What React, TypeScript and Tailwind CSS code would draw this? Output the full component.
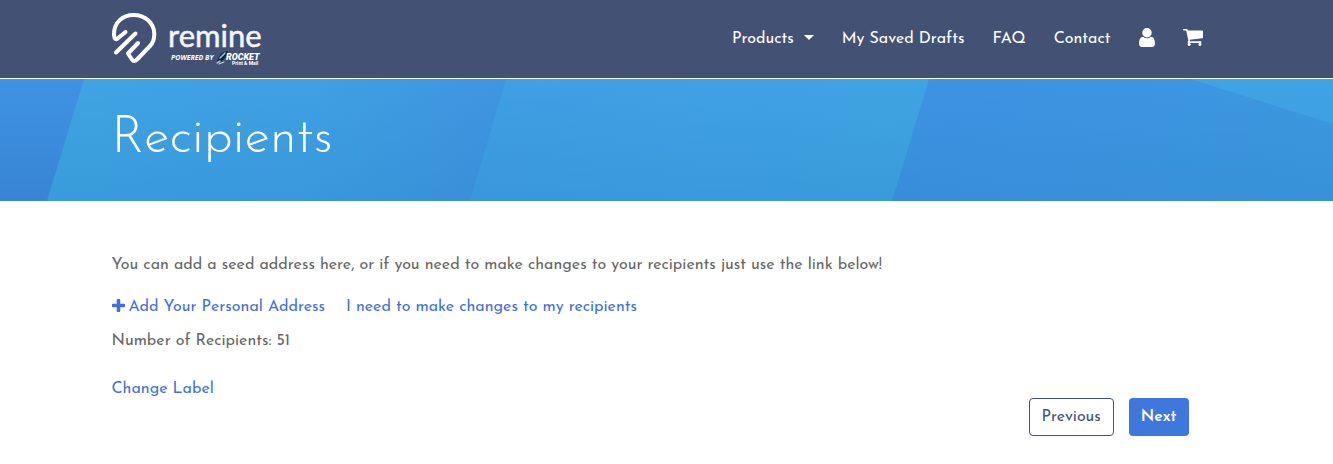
const icons = {
  user: {
    box: "256 128 1280 1536",
    path: "M1536 1399q0 109-62.5 187t-150.5 78h-854q-88 0-150.5-78t-62.5-187q0-85 8.5-160.5t31.5-152 58.5-131 94-89 134.5-34.5q131 128 313 128t313-128q76 0 134.5 34.5t94 89 58.5 131 31.5 152 8.5 160.5zm-256-887q0 159-112.5 271.5t-271.5 112.5-271.5-112.5-112.5-271.5 112.5-271.5 271.5-112.5 271.5 112.5 112.5 271.5z",
  },
  cart: {
    box: "64 256 1664 1408",
    path: "M704 1536q0 52-38 90t-90 38-90-38-38-90 38-90 90-38 90 38 38 90zm896 0q0 52-38 90t-90 38-90-38-38-90 38-90 90-38 90 38 38 90zm128-1088v512q0 24-16.5 42.5t-40.5 21.5l-1044 122q13 60 13 70 0 16-24 64h920q26 0 45 19t19 45-19 45-45 19h-1024q-26 0-45-19t-19-45q0-11 8-31.5t16-36 21.5-40 15.5-29.5l-177-823h-204q-26 0-45-19t-19-45 19-45 45-19h256q16 0 28.5 6.5t19.5 15.5 13 24.5 8 26 5.5 29.5 4.5 26h1201q26 0 45 19t19 45z",
  },
  plus: {
    box: "192 128 1408 1408",
    path: "M1600 736v192q0 40-28 68t-68 28h-416v416q0 40-28 68t-68 28h-192q-40 0-68-28t-28-68v-416h-416q-40 0-68-28t-28-68v-192q0-40 28-68t68-28h416v-416q0-40 28-68t68-28h192q40 0 68 28t28 68v416h416q40 0 68 28t28 68z",
  },
};

function Icon({ name, className }: { name: keyof typeof icons; className: string }) {
  return (
    <svg viewBox={icons[name].box} fill="currentColor" aria-hidden="true" className={className}>
      <path d={icons[name].path} />
    </svg>
  );
}

function Logo() {
  return (
    <svg viewBox="0 0 152 54" className="h-[54px] w-[152px]" role="img" aria-label="remine, powered by Rocket Print & Mail">
      <g fill="none" stroke="#fff" strokeWidth="4" strokeLinecap="round" strokeLinejoin="round">
        <path d="M13.500 20L5 27C3 28 2 25 2 22C2 11 10 3 21.700 3C33 3 42 11 42.300 21.500C42.400 27 41 31 38 34L25 47.500C23 49.500 21.500 49.500 20 47.500L16 41.500L26 31" />
        <path d="M4 40.500L23.500 21.500" />
      </g>
      <text x="56" y="35" fontSize="31" fill="#f4f5f8" stroke="#f4f5f8" strokeWidth=".5" className="font-['Lato',sans-serif]">remine</text>
      <text x="59" y="48" fontSize="7" fontWeight="700" fontStyle="italic" fill="#fff" className="font-['Open_Sans',sans-serif]">POWERED BY</text>
      <path d="M104 52c1-4 3-8 6-11 2-1 4-2 6-2-1 4-3 7-6 10z" fill="#10202f" />
      <path d="M108 46l5-5M105 51l3-2" stroke="#8fc4e8" strokeWidth="1.6" strokeLinecap="round" />
      <path d="M107 52l5-2" stroke="#dfe8f2" strokeWidth="1" strokeLinecap="round" />
      <text x="114" y="48" fontSize="9" fontWeight="900" fontStyle="italic" fill="#fff" className="font-['Roboto',sans-serif]">ROCKET</text>
      <text x="120" y="53" fontSize="5" fontWeight="700" fill="#fff" className="font-['Roboto',sans-serif]">Print &amp; Mail</text>
    </svg>
  );
}

function Banner() {
  return (
    <svg viewBox="0 0 1333 122" preserveAspectRatio="none" aria-hidden="true" className="absolute inset-0 size-full">
      <defs>
        <linearGradient id="left" x1="0" y1="0" x2="0" y2="1">
          <stop offset="0" stopColor="#3f93e4" />
          <stop offset="1" stopColor="#3884d4" />
        </linearGradient>
        <linearGradient id="mid" x1="47" y1="0" x2="490" y2="70" gradientUnits="userSpaceOnUse">
          <stop offset="0" stopColor="#40a4e2" />
          <stop offset=".6" stopColor="#3fa0e3" />
          <stop offset="1" stopColor="#4095e1" />
        </linearGradient>
        <linearGradient id="center" x1="470" y1="0" x2="929" y2="0" gradientUnits="userSpaceOnUse">
          <stop offset="0" stopColor="#409ee5" />
          <stop offset="1" stopColor="#40a4e2" />
        </linearGradient>
        <linearGradient id="right" x1="892" y1="0" x2="1333" y2="0" gradientUnits="userSpaceOnUse">
          <stop offset="0" stopColor="#3e92e3" />
          <stop offset="1" stopColor="#3d98e0" />
        </linearGradient>
        <linearGradient id="shade" x1="0" y1="0" x2="0" y2="1">
          <stop offset="0" stopColor="#1d7ab8" stopOpacity="0" />
          <stop offset="1" stopColor="#1d7ab8" stopOpacity=".2" />
        </linearGradient>
      </defs>
      <path d="M0 0H1333V122H0Z" fill="url(#right)" />
      <path d="M0 0H929L892 122H0Z" fill="url(#center)" />
      <path d="M0 0H506L470 122H0Z" fill="url(#mid)" />
      <path d="M1190 0H1333V45Z" fill="#40a3e4" />
      <path d="M0 0H1333V122H0Z" fill="url(#shade)" />
      <path d="M0 0H84L47 122H0Z" fill="url(#left)" />
    </svg>
  );
}

export default function App() {
  return (
    <div className="bg-white font-['Josefin_Sans','Lato',sans-serif] text-base leading-6 text-[#666]">
      <header className="border-b border-white bg-[#435274]">
        <div className="mx-auto flex h-[78px] max-w-[1140px] items-center justify-between pr-[34px] pl-[15px]">
          <a href="#home"><Logo /></a>
          <nav className="flex items-center gap-7 text-white">
            <button type="button" className="flex items-center gap-[10px]">
              Products
              <span className="mb-1 border-x-[5px] border-t-[5px] border-x-transparent border-t-white" />
            </button>
            <a href="#drafts">My Saved Drafts</a>
            <a href="#faq">FAQ</a>
            <a href="#contact">Contact</a>
            <a href="#account" aria-label="Account" className="pb-1"><Icon name="user" className="h-[19px] w-4" /></a>
            <a href="#cart" aria-label="Cart" className="pb-1"><Icon name="cart" className="h-[17px] w-5" /></a>
          </nav>
        </div>
      </header>
      <section className="relative h-[122px]">
        <Banner />
        <div className="relative mx-auto max-w-[1140px] px-[15px] pt-[30px]">
          <h1 className="text-[52px] leading-[60px] font-light text-white">Recipients</h1>
        </div>
      </section>
      <main className="mx-auto max-w-[1140px] px-[15px] pt-[52px]">
        <p>You can add a seed address here, or if you need to make changes to your recipients just use the link below!</p>
        <div className="mt-[18px] flex gap-[21px] text-[#3f71dc]">
          <a href="#add" className="flex items-center gap-1"><Icon name="plus" className="mb-1 size-[13px]" />Add Your Personal Address</a>
          <a href="#changes">I need to make changes to my recipients</a>
        </div>
        <p className="mt-[10px]">Number of Recipients: 51</p>
        <a href="#label" className="mt-6 block w-fit text-[#3f71dc]">Change Label</a>
        <div className="-mt-[3px] flex justify-end gap-[15px] pr-[33px]">
          <button type="button" className="h-[38px] rounded border border-[#435274] px-3 text-[#435274]">Previous</button>
          <button type="button" className="h-[38px] rounded bg-[#3e78dd] px-3 font-semibold text-white">Next</button>
        </div>
      </main>
    </div>
  );
}
